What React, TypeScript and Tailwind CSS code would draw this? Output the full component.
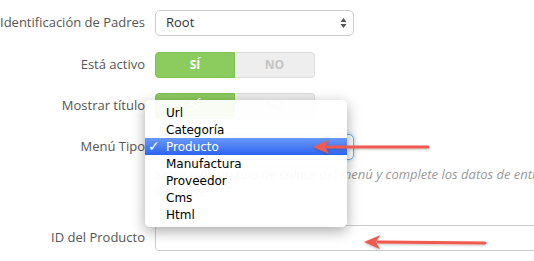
import React from "react";

const items = ["Url", "Categoría", "Producto", "Manufactura", "Proveedor", "Cms", "Html"];

function Label({ children }: { children: React.ReactNode }) {
  return (
    <div className="w-[145px] shrink-0 text-right text-[13px] text-[#555] whitespace-nowrap">{children}</div>
  );
}

function Switch() {
  return (
    <div className="ml-[10px] flex h-[26px] w-[160px] text-[12px] font-bold">
      <div className="flex w-[80px] items-center justify-center rounded-l-[4px] border border-[#7fc04f] bg-[#8ccb5d] text-white">SÍ</div>
      <div className="flex w-[80px] items-center justify-center rounded-r-[4px] border border-l-0 border-[#dddddd] bg-[#eeeeee] text-[#c4c4c4]">NO</div>
    </div>
  );
}

function Arrow({ x1, y1, x2, y2 }: { x1: number; y1: number; x2: number; y2: number }) {
  const ang = Math.atan2(y2 - y1, x2 - x1);
  const len = 16;
  const w = 7;
  const bx = x2 - len * Math.cos(ang);
  const by = y2 - len * Math.sin(ang);
  const px = -Math.sin(ang) * w;
  const py = Math.cos(ang) * w;
  return (
    <g filter="url(#sh)">
      <line x1={x1} y1={y1} x2={bx + 2 * Math.cos(ang)} y2={by + 2 * Math.sin(ang)} stroke="#f25a50" strokeWidth={3} strokeLinecap="round" />
      <polygon points={`${x2},${y2} ${bx + px},${by + py} ${bx + 4 * Math.cos(ang)},${by + 4 * Math.sin(ang)} ${bx - px},${by - py}`} fill="#f25a50" />
    </g>
  );
}

export default function App() {
  return (
    <div className="relative h-[261px] w-[534px] overflow-hidden bg-white" style={{ fontFamily: "'Open Sans', sans-serif" }}>
      <div className="pt-[10px]">
        <div className="flex h-[26px] items-center">
          <Label>Identificación de Padres</Label>
          <div className="ml-[10px] flex h-[26px] w-[199px] items-center justify-between rounded-[5px] border border-[#cccccc] bg-white pl-[10px] pr-[6px] text-[13px] text-[#333]">
            <span>Root</span>
            <svg width="7" height="12" viewBox="0 0 7 12">
              <path d="M3.5 1 L6.5 5 L0.5 5 Z" fill="#555" />
              <path d="M3.5 11 L6.5 7 L0.5 7 Z" fill="#555" />
            </svg>
          </div>
        </div>
        <div className="mt-[16px] flex h-[26px] items-center">
          <Label>Está activo</Label>
          <Switch />
        </div>
        <div className="mt-[15px] flex h-[26px] items-center">
          <Label>Mostrar título</Label>
          <Switch />
        </div>
        <div className="mt-[15px] flex h-[26px] items-center">
          <Label>Menú Tipo</Label>
          <div className="ml-[10px] flex h-[26px] w-[199px] items-center rounded-[5px] border border-[#66afe9] bg-white pl-[10px] text-[13px] text-[#333] shadow-[0_0_4px_rgba(102,175,233,0.6)]">
            Producto
          </div>
        </div>
        <div className="ml-[155px] mt-[6px] text-[13px] italic leading-[17px] text-[#999] whitespace-nowrap">
          Seleccione un tipo de enlace del menú y complete los datos de entrada del campo
          <br />
          siguiente
        </div>
        <div className="mt-[25px] flex h-[26px] items-center">
          <Label>ID del Producto</Label>
          <div className="ml-[10px] h-[26px] w-[420px] shrink-0 rounded-[4px] border border-[#cccccc] bg-white" />
        </div>
      </div>

      <div className="absolute left-[145px] top-[100px] w-[202px] rounded-[5px] bg-white/[0.94] py-[4px] text-[12px] text-black shadow-[0_4px_14px_rgba(0,0,0,0.35)]" style={{ fontFamily: "'DejaVu Sans', sans-serif" }}>
        {items.map((it) => (
          <div
            key={it}
            className={
              it === "Producto"
                ? "relative flex h-[17px] items-center bg-gradient-to-b from-[#6a98f8] to-[#2c63f1] pl-[21px] text-white"
                : "flex h-[17px] items-center pl-[21px]"
            }
          >
            {it === "Producto" && <span className="absolute left-[3px] text-[14px] font-bold">✓</span>}
            {it}
          </div>
        ))}
      </div>

      <svg className="pointer-events-none absolute left-0 top-0" width="534" height="261">
        <defs>
          <filter id="sh" x="-10%" y="-50%" width="120%" height="200%">
            <feDropShadow dx="0" dy="1" stdDeviation="1" floodColor="#000" floodOpacity="0.25" />
          </filter>
        </defs>
        <Arrow x1={428} y1={147} x2={313} y2={147} />
        <Arrow x1={485} y1={243} x2={364} y2={242} />
      </svg>
    </div>
  );
}
